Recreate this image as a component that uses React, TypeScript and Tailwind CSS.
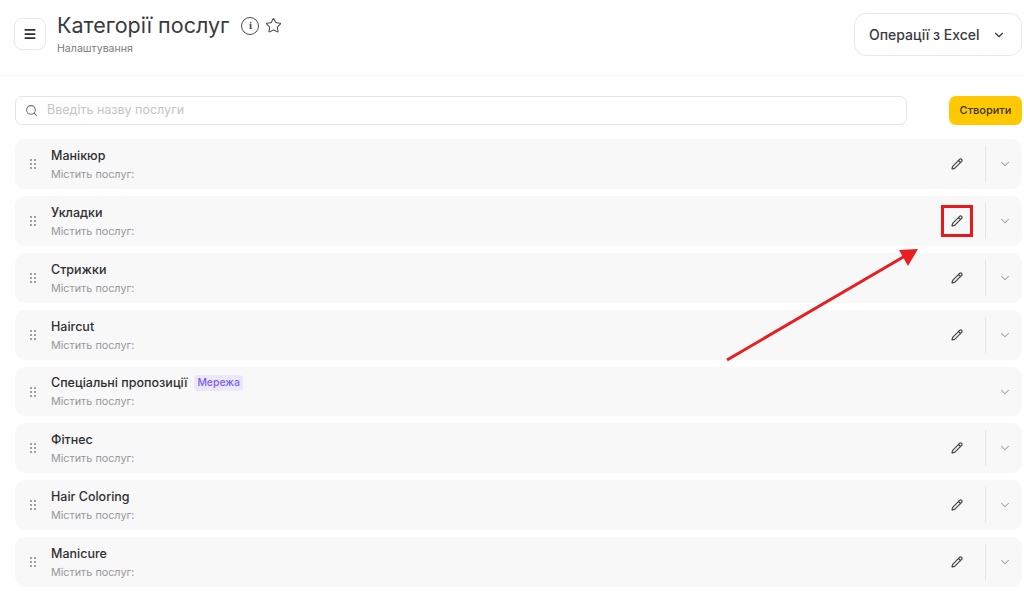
import { ChevronDown, Menu, Pencil, Search, Star } from 'lucide-react'

interface Category {
  name: string
  badge?: string
  readOnly?: boolean
}

const CATEGORIES: Category[] = [
  { name: 'Манікюр' },
  { name: 'Укладки' },
  { name: 'Стрижки' },
  { name: 'Haircut' },
  { name: 'Спеціальні пропозиції', badge: 'Мережа', readOnly: true },
  { name: 'Фітнес' },
  { name: 'Hair Coloring' },
  { name: 'Manicure' },
]

function GripDots() {
  return (
    <svg className="h-[10px] w-[6px] shrink-0" viewBox="0 0 6 10" fill="#77777c">
      <circle cx="1" cy="1" r="0.9" />
      <circle cx="5" cy="1" r="0.9" />
      <circle cx="1" cy="5" r="0.9" />
      <circle cx="5" cy="5" r="0.9" />
      <circle cx="1" cy="9" r="0.9" />
      <circle cx="5" cy="9" r="0.9" />
    </svg>
  )
}

function CategoryRow({ item }: { item: Category }) {
  return (
    <div
      className={`flex items-center rounded-[10px] bg-[#f8f8f8] pl-[15px] pr-[10px] ${
        item.readOnly ? 'h-[49px]' : 'h-[50px]'
      }`}
    >
      <GripDots />
      <div className="ml-[15px] min-w-0 flex-1">
        <div className="flex h-[20px] items-center">
          <span className="text-[12.5px] font-medium leading-[20px] text-[#2f2f33]">{item.name}</span>
          {item.badge && (
            <span className="ml-[7px] rounded-[4px] bg-[#ece8fb] px-[3px] text-[10.4px] font-medium leading-[16px] text-[#7a5ce6]">
              {item.badge}
            </span>
          )}
        </div>
        <div className="mt-[1px] text-[10.8px] leading-[16px] text-[#97979c]">Містить послуг:</div>
      </div>
      {!item.readOnly && (
        <>
          <Pencil className="mr-[22px] h-[12px] w-[12px] text-[#47474b]" strokeWidth={2.5} />
          <div className="h-[36px] w-[1px] bg-[#e6e6e8]" />
        </>
      )}
      <ChevronDown className="ml-[12px] h-[14px] w-[14px] text-[#9c9ca2]" strokeWidth={1.75} />
    </div>
  )
}

export default function App() {
  return (
    <div className="relative h-[591px] w-[1024px] overflow-hidden bg-white font-['Inter',sans-serif]">
      <header className="flex h-[76px] items-start border-b border-[#f3f3f4] pl-[14px] pr-[2px]">
        <button
          type="button"
          className="mt-[18px] flex h-[32px] w-[32px] items-center justify-center rounded-[8px] border border-[#e6e7ee] bg-white"
        >
          <Menu className="h-[14px] w-[14px] text-[#2f2f33]" strokeWidth={3} />
        </button>
        <div className="ml-[11px] mt-[12px]">
          <div className="flex items-center">
            <h1 className="text-[21.5px] font-normal leading-[27px] text-[#3a3a3e]">Категорії послуг</h1>
            <span className="ml-[12px] flex h-[18px] w-[18px] items-center justify-center rounded-full border-[1.5px] border-[#4a4a4e] font-['Liberation_Serif',serif] text-[11px] font-bold leading-none text-[#4a4a4e]">
              i
            </span>
            <Star className="ml-[6px] h-[17px] w-[17px] text-[#4a4a4e]" strokeWidth={1.5} />
          </div>
          <div className="mt-[3px] text-[10.6px] leading-[14px] text-[#7c7c82]">Налаштування</div>
        </div>
        <button
          type="button"
          className="ml-auto mt-[13px] flex h-[43px] w-[168px] items-center rounded-[12px] border border-[#e8e8ea] bg-white pl-[14px]"
        >
          <span className="text-[14px] font-medium leading-none text-[#3a3a42]">Операції з Excel</span>
          <ChevronDown className="ml-[12px] h-[14px] w-[14px] text-[#3a3a42]" strokeWidth={2} />
        </button>
      </header>

      <div className="pl-[15px] pr-[2px] pt-[20px]">
        <div className="flex items-center justify-between">
          <div className="flex h-[29px] w-[892px] items-center rounded-[7px] border border-[#e5e5e7] bg-white pl-[9px]">
            <Search className="h-[13px] w-[13px] text-[#77777c]" strokeWidth={2} />
            <span className="ml-[9px] text-[12.5px] leading-none text-[#c4c4c8]">Введіть назву послуги</span>
          </div>
          <button
            type="button"
            className="h-[29px] w-[73px] rounded-[7px] bg-[#ffc800] text-[11px] font-medium text-[#3a3320]"
          >
            Створити
          </button>
        </div>

        <div className="mt-[14px] flex flex-col gap-[7px]">
          {CATEGORIES.map((item) => (
            <CategoryRow key={item.name} item={item} />
          ))}
        </div>
      </div>

      {/* Annotation drawn over the screenshot */}
      <div className="absolute left-[941px] top-[205px] h-[32px] w-[32px] border-[3px] border-[#e8191c]" />
      <svg className="absolute left-0 top-0" width="1024" height="591" viewBox="0 0 1024 591" fill="none">
        <line x1="727" y1="360" x2="905" y2="256" stroke="#e81e20" strokeWidth="3" />
        <path d="M918 249 L899 250 L908 266 Z" fill="#e81e20" />
      </svg>
    </div>
  )
}
